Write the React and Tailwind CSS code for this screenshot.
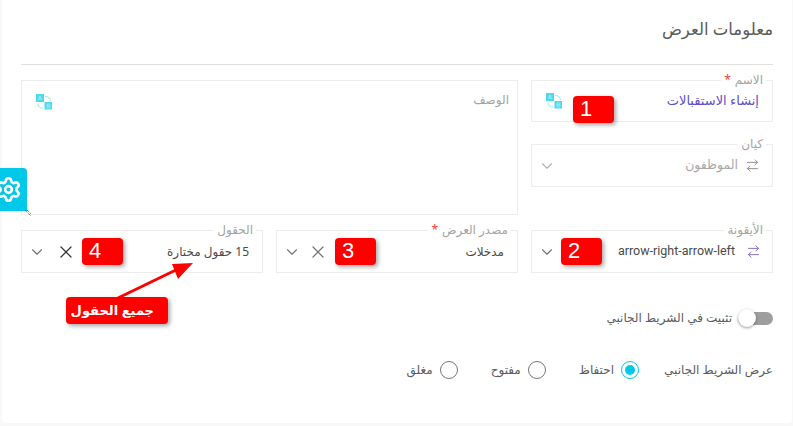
import { ArrowRightLeft, ChevronDown, Settings, X } from 'lucide-react';

const arabicFont = "font-['Noto_Sans','DejaVu_Sans',sans-serif]";

function TranslateIcon({ className }) {
    return (
        <svg viewBox="0 0 16 16" className={className}>
            <rect x="0" y="0" width="8" height="8" fill="#4dd9ee" />
            <rect x="8.5" y="8" width="7.5" height="7.5" fill="#4dd9ee" />
            <path d="M9 2.5c3 0 5 1.5 5.5 4.5M2 9.5c0 2.5 2 4.5 5 4.5" fill="none" stroke="#a5ecf6" strokeWidth="1.2" />
            <path d="M2.5 6l1.5-4L5.5 6M3 5h2" fill="none" stroke="#c9f4fa" strokeWidth="0.6" />
            <path d="M11 10h2a1 1 0 0 1 0 2h-2zM11 12h2.2a1 1 0 0 1 0 2H11z" fill="none" stroke="#c9f4fa" strokeWidth="0.5" />
        </svg>
    );
}

function Field({ label, required, children, className }) {
    return (
        <div className={`relative border border-[#ececec] ${className}`}>
            <span className="absolute -top-[9px] right-[6px] bg-white px-[3px] text-[12px] leading-4 text-[#a3a3a3]">
                {label}
                {required && <span className="mr-1 text-[#f44336]">*</span>}
            </span>
            {children}
        </div>
    );
}

function Badge({ children, className }) {
    return (
        <div className={`absolute h-[27px] w-[41px] rounded-[4px] bg-[#ff0000] pl-[7px] text-left font-['Liberation_Sans',sans-serif] text-[22px] leading-[26px] text-white shadow-[2px_2px_4px_rgba(0,0,0,0.35)] ${className}`} dir="ltr">
            {children}
        </div>
    );
}

function Radio({ label, checked }) {
    return (
        <label className="flex items-center gap-[7px]">
            {checked ? (
                <span className="flex h-[18px] w-[18px] items-center justify-center rounded-full border border-[#00c8e8]">
                    <span className="h-[10px] w-[10px] rounded-full bg-[#00c8e8]" />
                </span>
            ) : (
                <span className="h-[18px] w-[18px] rounded-full border border-[#757575]" />
            )}
            <span className="text-[12px] text-[#5c5c5c]">{label}</span>
        </label>
    );
}

export default function App() {
    return (
        <div className={`relative h-[426px] w-[793px] overflow-hidden bg-[#f8f8f8] pl-[2px] pr-[1px] ${arabicFont}`} dir="rtl">
            <div className="h-[423px] rounded-b-[4px] bg-white px-[19px]">
                <div className="flex h-[65px] items-center border-b border-[#e0e0e0] pb-[6px]">
                    <h2 className="text-[16.5px] font-normal text-[#5a5a5a]">معلومات العرض</h2>
                </div>

                <div className="mt-[15px] grid grid-cols-[242px_497px] gap-x-[13px]">
                    <div className="flex flex-col gap-[22px]">
                        <Field label="الاسم" required className="flex h-[42px] items-center justify-between pr-[13px] pl-[14px]">
                            <span className="text-[13px] text-[#5b4fc9]">إنشاء الاستقبالات</span>
                            <TranslateIcon className="h-4 w-4" />
                        </Field>
                        <Field label="كيان" className="flex h-[43px] items-center justify-between pr-[12px] pl-[6px]">
                            <span className="flex items-center gap-[7px] text-[12.5px] text-[#a8a8a8]">
                                <ArrowRightLeft className="h-[15px] w-[15px] text-[#8a8a8a]" strokeWidth={1.5} />
                                الموظفون
                            </span>
                            <ChevronDown className="h-[18px] w-[18px] text-[#b0b0b0]" strokeWidth={1.5} />
                        </Field>
                    </div>
                    <div className="relative h-[135px] border border-[#ececec]">
                        <span className="absolute top-[11px] right-[8px] text-[12px] leading-4 text-[#a3a3a3]">الوصف</span>
                        <TranslateIcon className="absolute top-[13px] left-[14px] h-4 w-4" />
                    </div>
                </div>

                <div className="mt-[15px] grid grid-cols-[242px_242px_242px] gap-x-[13px]">
                    <Field label="الأيقونة" className="flex h-[43px] items-center justify-between pr-[11px] pl-[6px]">
                        <span className="flex items-center gap-[11px] font-['Roboto',sans-serif] text-[12.5px] text-[#4a4a4a]">
                            <ArrowRightLeft className="h-[15px] w-[15px] text-[#7f6bb5]" strokeWidth={1.5} />
                            arrow-right-arrow-left
                        </span>
                        <ChevronDown className="h-[18px] w-[18px] text-[#757575]" strokeWidth={1.5} />
                    </Field>
                    <Field label="مصدر العرض" required className="flex h-[43px] items-center justify-between pr-[13px] pl-[6px]">
                        <span className="text-[12px] text-[#4a4a4a]">مدخلات</span>
                        <span className="flex items-center gap-[7px]">
                            <X className="h-5 w-5 text-[#757575]" strokeWidth={1.5} />
                            <ChevronDown className="h-[18px] w-[18px] text-[#757575]" strokeWidth={1.5} />
                        </span>
                    </Field>
                    <Field label="الحقول" className="flex h-[43px] items-center justify-between pr-[13px] pl-[6px]">
                        <span className="text-[12px] text-[#4a4a4a]">15 حقول مختارة</span>
                        <span className="flex items-center gap-[10px]">
                            <X className="h-5 w-5 text-[#333333]" strokeWidth={1.5} />
                            <ChevronDown className="h-[18px] w-[18px] text-[#757575]" strokeWidth={1.5} />
                        </span>
                    </Field>
                </div>

                <div className="mt-[35px] flex h-[20px] items-center gap-[6px]">
                    <span className="relative block h-[13px] w-[35px] rounded-full bg-[#9e9e9e]">
                        <span className="absolute top-1/2 left-0 h-[18px] w-[18px] -translate-y-1/2 rounded-full bg-white shadow-[0_1px_3px_rgba(0,0,0,0.4)]" />
                    </span>
                    <span className="text-[12px] text-[#5c5c5c]">تثبيت في الشريط الجانبي</span>
                </div>

                <div className="mt-[32px] flex h-[20px] items-center">
                    <span className="w-[134px] text-[12px] text-[#5c5c5c]">عرض الشريط الجانبي</span>
                    <div className="flex items-center gap-[33px]">
                        <Radio label="احتفاظ" checked />
                        <Radio label="مفتوح" />
                        <Radio label="مغلق" />
                    </div>
                </div>
            </div>

            {/* floating settings tab */}
            <div className="absolute top-[168px] left-0 flex h-[43px] w-[27px] items-center justify-center rounded-tr-[4px] bg-[#00c8e8]">
                <Settings className="-ml-[11px] h-[27px] w-[27px] shrink-0 text-white" strokeWidth={2.4} />
            </div>
            <svg viewBox="0 0 8 8" className="absolute top-[209px] left-[24px] h-2 w-2">
                <path d="M1 1l6 6M3 1l4 4" stroke="#555555" strokeWidth="1" strokeDasharray="1 1" fill="none" />
            </svg>

            {/* annotations */}
            <Badge className="top-[96px] left-[573px]">1</Badge>
            <Badge className="top-[238px] left-[561px]">2</Badge>
            <Badge className="top-[238px] left-[335px]">3</Badge>
            <Badge className="top-[238px] left-[82px]">4</Badge>
            <svg viewBox="0 0 793 426" className="pointer-events-none absolute inset-0 h-[426px] w-[793px]">
                <path d="M118 298L180 268" stroke="#ff0000" strokeWidth="3" />
                <path d="M193 263L172 264L178 279z" fill="#ff0000" />
            </svg>
            <div className="absolute top-[297px] left-[66px] flex h-[27px] w-[102px] items-center whitespace-nowrap rounded-[4px] bg-[#ff0000] pr-[14px] font-['Liberation_Sans','DejaVu_Sans',sans-serif] text-[13px] font-bold text-white shadow-[2px_2px_4px_rgba(0,0,0,0.35)]">
                جميع الحقول
            </div>
        </div>
    );
}
